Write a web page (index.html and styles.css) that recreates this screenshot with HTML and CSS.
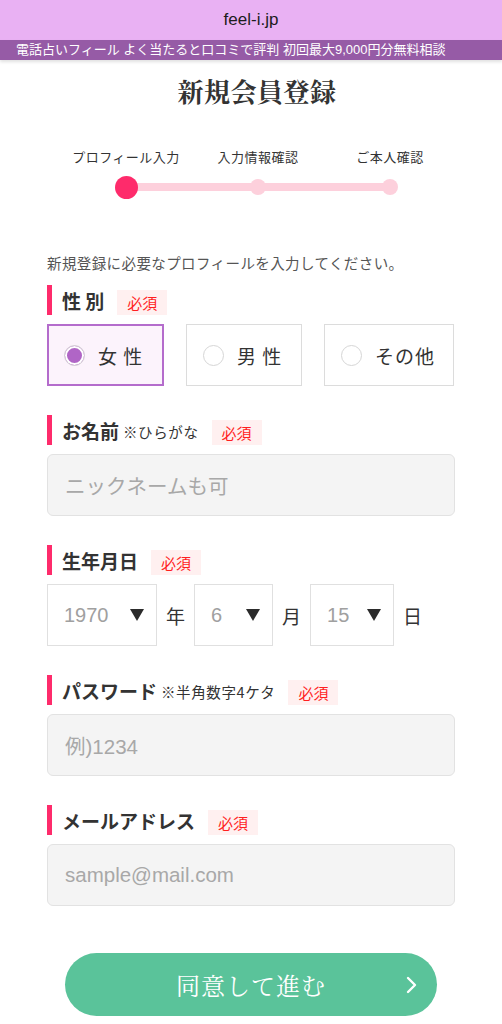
FILE: index.html
```html
<!DOCTYPE html>
<html lang="ja">
<head>
<meta charset="utf-8">
<title>新規会員登録</title>
<link rel="stylesheet" href="styles.css">
</head>
<body>
<header class="topbar">feel-i.jp</header>
<div class="banner">電話占いフィール よく当たると口コミで評判 初回最大9,000円分無料相談</div>
<main class="page">
  <h1 class="title">新規会員登録</h1>
  <ol class="steps">
    <li class="step active"><span class="step-label">プロフィール入力</span><span class="dot-wrap"><span class="dot"></span></span></li>
    <li class="step"><span class="step-label">入力情報確認</span><span class="dot-wrap"><span class="dot"></span></span></li>
    <li class="step"><span class="step-label">ご本人確認</span><span class="dot-wrap"><span class="dot"></span></span></li>
  </ol>
  <p class="intro">新規登録に必要なプロフィールを入力してください。</p>

  <section class="field first">
    <div class="field-head"><span class="field-name">性 別</span><span class="req">必須</span></div>
    <div class="radios">
      <label class="radio r1 checked"><span class="circle"></span><span class="radio-text">女 性</span></label>
      <label class="radio r2"><span class="circle"></span><span class="radio-text">男 性</span></label>
      <label class="radio r3"><span class="circle"></span><span class="radio-text">その他</span></label>
    </div>
  </section>

  <section class="field">
    <div class="field-head"><span class="field-name">お名前</span><span class="note">※ひらがな</span><span class="req">必須</span></div>
    <div class="input">ニックネームも可</div>
  </section>

  <section class="field">
    <div class="field-head"><span class="field-name">生年月日</span><span class="req">必須</span></div>
    <div class="dates">
      <div class="select s-year"><span class="sel-val">1970</span><svg class="arrow" viewBox="0 0 14 12" width="14" height="12"><polygon points="0,0 14,0 7,12" fill="#2b2b2b"/></svg></div>
      <span class="unit">年</span>
      <div class="select s-month"><span class="sel-val">6</span><svg class="arrow" viewBox="0 0 14 12" width="14" height="12"><polygon points="0,0 14,0 7,12" fill="#2b2b2b"/></svg></div>
      <span class="unit">月</span>
      <div class="select s-day"><span class="sel-val">15</span><svg class="arrow" viewBox="0 0 14 12" width="14" height="12"><polygon points="0,0 14,0 7,12" fill="#2b2b2b"/></svg></div>
      <span class="unit">日</span>
    </div>
  </section>

  <section class="field">
    <div class="field-head"><span class="field-name">パスワード</span><span class="note">※半角数字4ケタ</span><span class="req">必須</span></div>
    <div class="input">例)1234</div>
  </section>

  <section class="field">
    <div class="field-head"><span class="field-name">メールアドレス</span><span class="req">必須</span></div>
    <div class="input">sample@mail.com</div>
  </section>

  <button class="submit" type="button"><span class="submit-text">同意して進む</span><svg class="chev" viewBox="0 0 12 18" width="12" height="18"><polyline points="2,2 9,9 2,16" fill="none" stroke="#fff" stroke-width="2.4" stroke-linecap="round" stroke-linejoin="round"/></svg></button>
</main>
</body>
</html>
```
FILE: styles.css
```css
* { box-sizing: border-box; }
html, body { margin: 0; padding: 0; background: #fff; }
body {
  font-family: "Liberation Sans", "Noto Sans CJK JP", sans-serif;
  color: #333;
  width: 502px;
  overflow: hidden;
}
.topbar {
  height: 40px;
  background: #e9b1f3;
  color: #1c1c1c;
  font-size: 17px;
  display: flex;
  align-items: center;
  justify-content: center;
}
.banner {
  height: 20px;
  background: #965ba6;
  color: #fff;
  font-size: 13px;
  line-height: 20px;
  padding-left: 16px;
  white-space: nowrap;
  box-shadow: 0 2px 3px rgba(0,0,0,0.12);
}
.page {
  padding: 0 47px;
  display: flex;
  flex-direction: column;
}
.title {
  margin: 14px 0 0;
  padding-left: 12px;
  text-align: center;
  font-family: "Noto Serif CJK JP", "Noto Sans CJK JP", serif;
  font-size: 26px;
  line-height: 34px;
  font-weight: 700;
  color: #333;
  letter-spacing: 0.5px;
}
.steps {
  list-style: none;
  margin: 41px 0 0 13px;
  padding: 0;
  width: 396px;
  display: grid;
  grid-template-columns: repeat(3, 1fr);
  position: relative;
}
.steps::before {
  content: "";
  position: absolute;
  left: 66px;
  right: 66px;
  top: 34px;
  height: 8px;
  background: #fdd0dc;
  border-radius: 4px;
}
.step {
  display: flex;
  flex-direction: column;
  align-items: center;
}
.step-label {
  font-family: "Noto Sans CJK JP", sans-serif;
  font-size: 13px;
  line-height: 16px;
  letter-spacing: 0.5px;
  color: #333;
  white-space: nowrap;
}
.dot-wrap {
  margin-top: 10px;
  height: 24px;
  display: flex;
  align-items: center;
  justify-content: center;
  position: relative;
}
.dot {
  width: 16px;
  height: 16px;
  border-radius: 50%;
  background: #fdd0dc;
}
.step.active .dot {
  width: 23px;
  height: 23px;
  background: #fe2b6b;
}
.intro {
  margin: 54px 0 0;
  font-family: "Noto Sans CJK JP", sans-serif;
  font-size: 14.5px;
  line-height: 19px;
  letter-spacing: 0.4px;
  color: #555;
  white-space: nowrap;
}
.field { margin-top: 29px; }
.field.first { margin-top: 13px; }
.field-head {
  height: 30px;
  border-left: 5px solid #fe2b6b;
  padding-left: 10px;
  display: flex;
  align-items: center;
  font-family: "Noto Sans CJK JP", sans-serif;
  margin-bottom: 9px;
}
.field-name {
  font-size: 19px;
  font-weight: 700;
  color: #333;
}
.note {
  font-size: 14.5px;
  letter-spacing: 0.6px;
  color: #333;
  margin-left: 4px;
  margin-top: 3px;
}
.req {
  margin-left: 13px;
  margin-top: 4px;
  background: #fff0f0;
  color: #ff1f1f;
  font-size: 15px;
  height: 25px;
  line-height: 25px;
  padding: 0 10px;
}
.radios {
  display: flex;
  gap: 22px;
}
.radio {
  height: 62px;
  border: 1px solid #dcdcdc;
  background: #fff;
  display: flex;
  align-items: center;
  padding-left: 16px;
  gap: 13px;
}
.r1 { width: 117px; }
.r2 { width: 116px; }
.r3 { width: 130px; }
.radio.checked {
  border: 2px solid #b46ccc;
  background: #fcf3fc;
  padding-left: 15px;
}
.circle {
  width: 21px;
  height: 21px;
  border-radius: 50%;
  border: 1px solid #d6d6d6;
  background: #fff;
  flex: none;
}
.radio.checked .circle {
  background: #b065c6;
  box-shadow: inset 0 0 0 2px #fff;
  border: 1px solid #d8d8d8;
}
.radio-text {
  font-family: "Noto Sans CJK JP", sans-serif;
  font-size: 19px;
  color: #333;
  letter-spacing: 1px;
}
.input {
  height: 62px;
  background: #f4f4f4;
  border: 1px solid #e2e2e2;
  border-radius: 6px;
  display: flex;
  align-items: center;
  padding-left: 17px;
  font-size: 20.5px;
  color: #a8a8a8;
  font-family: "Liberation Sans", "Noto Sans CJK JP", sans-serif;
}
.dates {
  display: flex;
  align-items: center;
}
.select {
  height: 62px;
  border: 1px solid #e0e0e0;
  background: #fff;
  display: flex;
  align-items: center;
  justify-content: space-between;
  padding: 0 12px 0 16px;
}
.s-year { width: 110px; }
.s-month { width: 79px; }
.s-day { width: 84px; }
.sel-val {
  font-size: 20px;
  color: #a0a0a0;
}
.arrow { display: block; }
.unit {
  font-family: "Noto Sans CJK JP", sans-serif;
  font-size: 19px;
  color: #333;
  margin: 0 9px;
}
.submit {
  margin: 47px auto 0;
  width: 372px;
  height: 63px;
  border: none;
  border-radius: 32px;
  background: #5ac39a;
  color: #fff;
  position: relative;
  display: flex;
  align-items: center;
  justify-content: center;
  padding: 0;
}
.submit-text {
  font-family: "Noto Serif CJK JP", "Noto Sans CJK JP", serif;
  font-size: 24px;
  letter-spacing: 1px;
}
.chev {
  position: absolute;
  right: 19px;
  top: 23px;
}
```
